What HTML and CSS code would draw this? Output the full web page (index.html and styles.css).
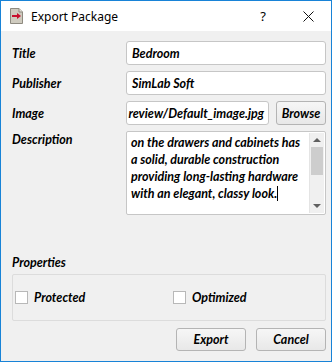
FILE: index.html
```html
<!DOCTYPE html>
<html lang="en">

<head>
    <meta charset="UTF-8">
    <title>Export Package</title>
    <link rel="stylesheet" href="styles.css">
</head>

<body>
    <div class="window">
        <div class="titlebar">
            <svg class="app-icon" width="15" height="16" viewBox="0 0 15 16">
                <path d="M1.5 0.5 H10 L13.5 4 V15.5 H1.5 Z" fill="#cfcbbf" stroke="#8e8a80" />
                <path d="M10 0.5 V4 H13.5" fill="#e6e3da" stroke="#8e8a80" />
                <rect x="3" y="7" width="6" height="2" fill="#c8102e" />
                <path d="M8 5 L12 8 L8 11 Z" fill="#c8102e" />
            </svg>
            <span class="title-text">Export Package</span>
            <span class="help">?</span>
            <svg class="close" width="11" height="11" viewBox="0 0 11 11">
                <path d="M0.5 0.5 L10.5 10.5 M10.5 0.5 L0.5 10.5" stroke="#111" stroke-width="1" />
            </svg>
        </div>

        <div class="content">
            <div class="form">
                <label class="lbl">Title</label>
                <div class="field">Bedroom</div>

                <label class="lbl">Publisher</label>
                <div class="field">SimLab Soft</div>

                <label class="lbl">Image</label>
                <div class="image-row">
                    <div class="field clip"><span>review/Default_image.jpg</span></div>
                    <button class="btn browse">Browse</button>
                </div>

                <label class="lbl top">Description</label>
                <div class="textarea">
                    <div class="text">on the drawers and cabinets has a solid, durable construction providing long-lasting hardware with an elegant, classy look.<span class="caret"></span></div>
                    <div class="scrollbar">
                        <div class="arrow up"></div>
                        <div class="thumb"></div>
                        <div class="track"></div>
                        <div class="arrow down"></div>
                    </div>
                </div>
            </div>

            <div class="props-label">Properties</div>
            <div class="group">
                <div class="check"><span class="box"></span>Protected</div>
                <div class="check"><span class="box"></span>Optimized</div>
            </div>

            <div class="actions">
                <button class="btn action">Export</button>
                <button class="btn action">Cancel</button>
            </div>
        </div>
    </div>
</body>

</html>
```

FILE: styles.css
```css
* {
    box-sizing: border-box;
}

body {
    margin: 0;
    background: #f0f0f0;
    font-family: "Lato", "Noto Sans", sans-serif;
}

.window {
    width: 332px;
    height: 362px;
    border: 1px solid #1883d7;
    background: #f0f0f0;
    display: flex;
    flex-direction: column;
}

.titlebar {
    height: 30px;
    background: #fff;
    display: flex;
    align-items: center;
    padding-left: 8px;
    font-family: "Noto Sans", sans-serif;
    font-size: 12px;
    color: #000;
}

.app-icon {
    margin-right: 7px;
}

.title-text {
    flex: 1;
}

.help {
    font-size: 13px;
    margin-right: 37px;
}

.close {
    margin-right: 17px;
}

.content {
    flex: 1;
    padding: 10px 5px 0 11px;
    font-style: italic;
    font-weight: 700;
    font-size: 12.5px;
    color: #000;
}

.form {
    display: grid;
    grid-template-columns: 114px 1fr;
    row-gap: 6px;
}

.lbl {
    display: flex;
    align-items: center;
    height: 24px;
}

.lbl.top {
    align-items: flex-start;
    padding-top: 1px;
}

.field {
    height: 24px;
    background: #fff;
    border: 1px solid #c6c6c6;
    border-radius: 3px;
    padding: 0 5px;
    display: flex;
    align-items: center;
    white-space: nowrap;
    overflow: hidden;
}

.field.clip {
    flex: 1;
    justify-content: flex-end;
    padding: 0 4px 0 0;
}

.image-row {
    display: flex;
    gap: 7px;
}

.btn {
    font: inherit;
    color: #000;
    background: linear-gradient(#f6f6f6, #e8e8e8);
    border: 1px solid #b4b4b4;
    border-radius: 3px;
    cursor: pointer;
    padding: 0;
}

.browse {
    width: 50px;
    height: 24px;
}

.textarea {
    height: 84px;
    background: #fff;
    border: 1px solid #c6c6c6;
    border-radius: 2px;
    display: flex;
}

.text {
    flex: 1;
    padding: 2px 0 0 4px;
    line-height: 17px;
}

.caret {
    display: inline-block;
    width: 1px;
    height: 15px;
    background: #000;
    vertical-align: -3px;
}

.scrollbar {
    width: 15px;
    margin: 1px 1px 1px 0;
    border-left: 1px solid #e4e4e4;
    background: #f0f0f0;
    display: flex;
    flex-direction: column;
}

.arrow {
    height: 14px;
    position: relative;
}

.arrow::after {
    content: "";
    position: absolute;
    left: 3px;
    top: 5px;
    border-left: 4px solid transparent;
    border-right: 4px solid transparent;
}

.arrow.up::after {
    border-bottom: 4px solid #606060;
}

.arrow.down::after {
    border-top: 4px solid #606060;
}

.thumb {
    height: 28px;
    background: #cdcdcd;
    margin: 0 1px;
}

.track {
    flex: 1;
}

.props-label {
    margin-top: 40px;
    height: 15px;
    line-height: 15px;
}

.group {
    margin-top: 4px;
    height: 47px;
    border: 1px solid #dcdcdc;
    border-radius: 2px;
    display: grid;
    grid-template-columns: 158px 1fr;
    align-items: center;
    padding-left: 2px;
}

.check {
    display: flex;
    align-items: center;
}

.box {
    width: 13px;
    height: 13px;
    background: #fff;
    border: 1px solid #b8b8b8;
    margin-right: 6px;
}

.actions {
    display: flex;
    justify-content: flex-end;
    gap: 10px;
    margin-top: 7px;
}

.action {
    width: 70px;
    height: 23px;
}
```
